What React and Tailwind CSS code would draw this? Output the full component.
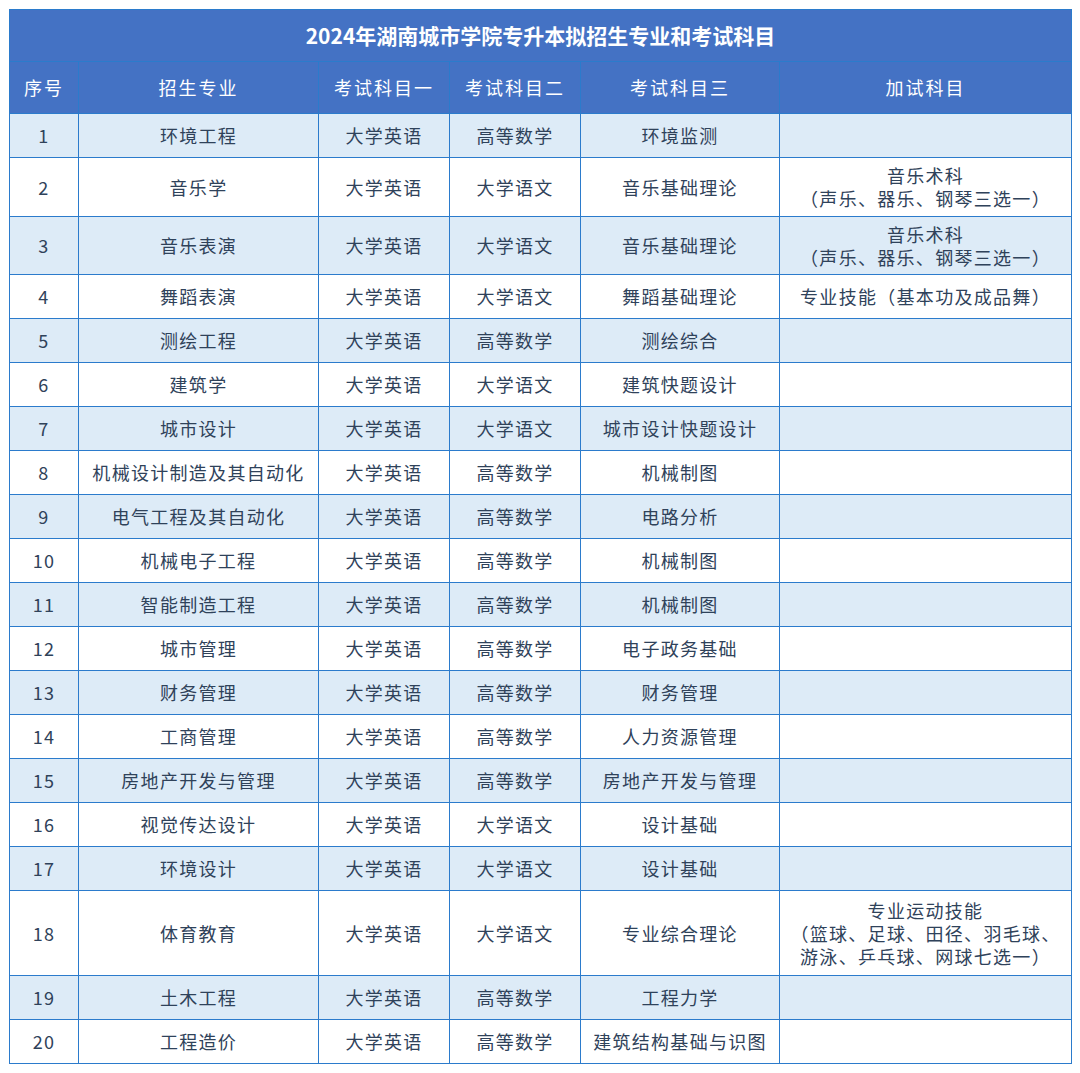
import React from "react";

const rows = [
  ["1", "环境工程", "大学英语", "高等数学", "环境监测", ""],
  ["2", "音乐学", "大学英语", "大学语文", "音乐基础理论", ["音乐术科", "（声乐、器乐、钢琴三选一）"]],
  ["3", "音乐表演", "大学英语", "大学语文", "音乐基础理论", ["音乐术科", "（声乐、器乐、钢琴三选一）"]],
  ["4", "舞蹈表演", "大学英语", "大学语文", "舞蹈基础理论", "专业技能（基本功及成品舞）"],
  ["5", "测绘工程", "大学英语", "高等数学", "测绘综合", ""],
  ["6", "建筑学", "大学英语", "大学语文", "建筑快题设计", ""],
  ["7", "城市设计", "大学英语", "大学语文", "城市设计快题设计", ""],
  ["8", "机械设计制造及其自动化", "大学英语", "高等数学", "机械制图", ""],
  ["9", "电气工程及其自动化", "大学英语", "高等数学", "电路分析", ""],
  ["10", "机械电子工程", "大学英语", "高等数学", "机械制图", ""],
  ["11", "智能制造工程", "大学英语", "高等数学", "机械制图", ""],
  ["12", "城市管理", "大学英语", "高等数学", "电子政务基础", ""],
  ["13", "财务管理", "大学英语", "高等数学", "财务管理", ""],
  ["14", "工商管理", "大学英语", "高等数学", "人力资源管理", ""],
  ["15", "房地产开发与管理", "大学英语", "高等数学", "房地产开发与管理", ""],
  ["16", "视觉传达设计", "大学英语", "大学语文", "设计基础", ""],
  ["17", "环境设计", "大学英语", "大学语文", "设计基础", ""],
  ["18", "体育教育", "大学英语", "大学语文", "专业综合理论", ["专业运动技能", "（篮球、足球、田径、羽毛球、", "游泳、乒乓球、网球七选一）"]],
  ["19", "土木工程", "大学英语", "高等数学", "工程力学", ""],
  ["20", "工程造价", "大学英语", "高等数学", "建筑结构基础与识图", ""],
];

const heights = { "2": "h-[59px]", "3": "h-[58px]", "18": "h-[85px]" };
const headers = ["序号", "招生专业", "考试科目一", "考试科目二", "考试科目三", "加试科目"];

const Cell = ({ value }) => {
  if (Array.isArray(value)) {
    return (
      <div className="flex flex-col items-center">
        {value.map((line) => (
          <div key={line} className="h-[23px] leading-[23px] overflow-visible">
            {line}
          </div>
        ))}
      </div>
    );
  }
  return value;
};

export default function App() {
  return (
    <div
      className="bg-white pt-[9px] pl-[9px] w-[1080px] h-[1073px]"
      style={{ fontFamily: '"Noto Sans CJK SC", "Noto Sans", sans-serif' }}
    >
      <table className="border-collapse table-fixed w-[1062px] text-center">
        <colgroup>
          <col className="w-[69px]" />
          <col className="w-[240px]" />
          <col className="w-[131px]" />
          <col className="w-[131px]" />
          <col className="w-[199px]" />
          <col className="w-[292px]" />
        </colgroup>
        <thead>
          <tr className="h-[52px] bg-[#4472c4]">
            <th
              colSpan={6}
              className="border border-[#2b7bcc] text-white text-[21px] font-bold"
            >
              2024年湖南城市学院专升本拟招生专业和考试科目
            </th>
          </tr>
          <tr className="h-[52px] bg-[#4472c4]">
            {headers.map((h) => (
              <th
                key={h}
                className="border border-[#2b7bcc] text-white text-[18px] font-normal tracking-[2px]"
              >
                {h}
              </th>
            ))}
          </tr>
        </thead>
        <tbody>
          {rows.map((r, i) => (
            <tr
              key={r[0]}
              className={`${heights[r[0]] || "h-[44px]"} ${i % 2 === 0 ? "bg-[#ddebf7]" : "bg-white"}`}
            >
              {r.map((c, j) => (
                <td
                  key={j}
                  className="border border-[#2b7bcc] text-[#2f425a] text-[18px] tracking-[1.3px] p-0 align-middle"
                >
                  <Cell value={c} />
                </td>
              ))}
            </tr>
          ))}
        </tbody>
      </table>
    </div>
  );
}
